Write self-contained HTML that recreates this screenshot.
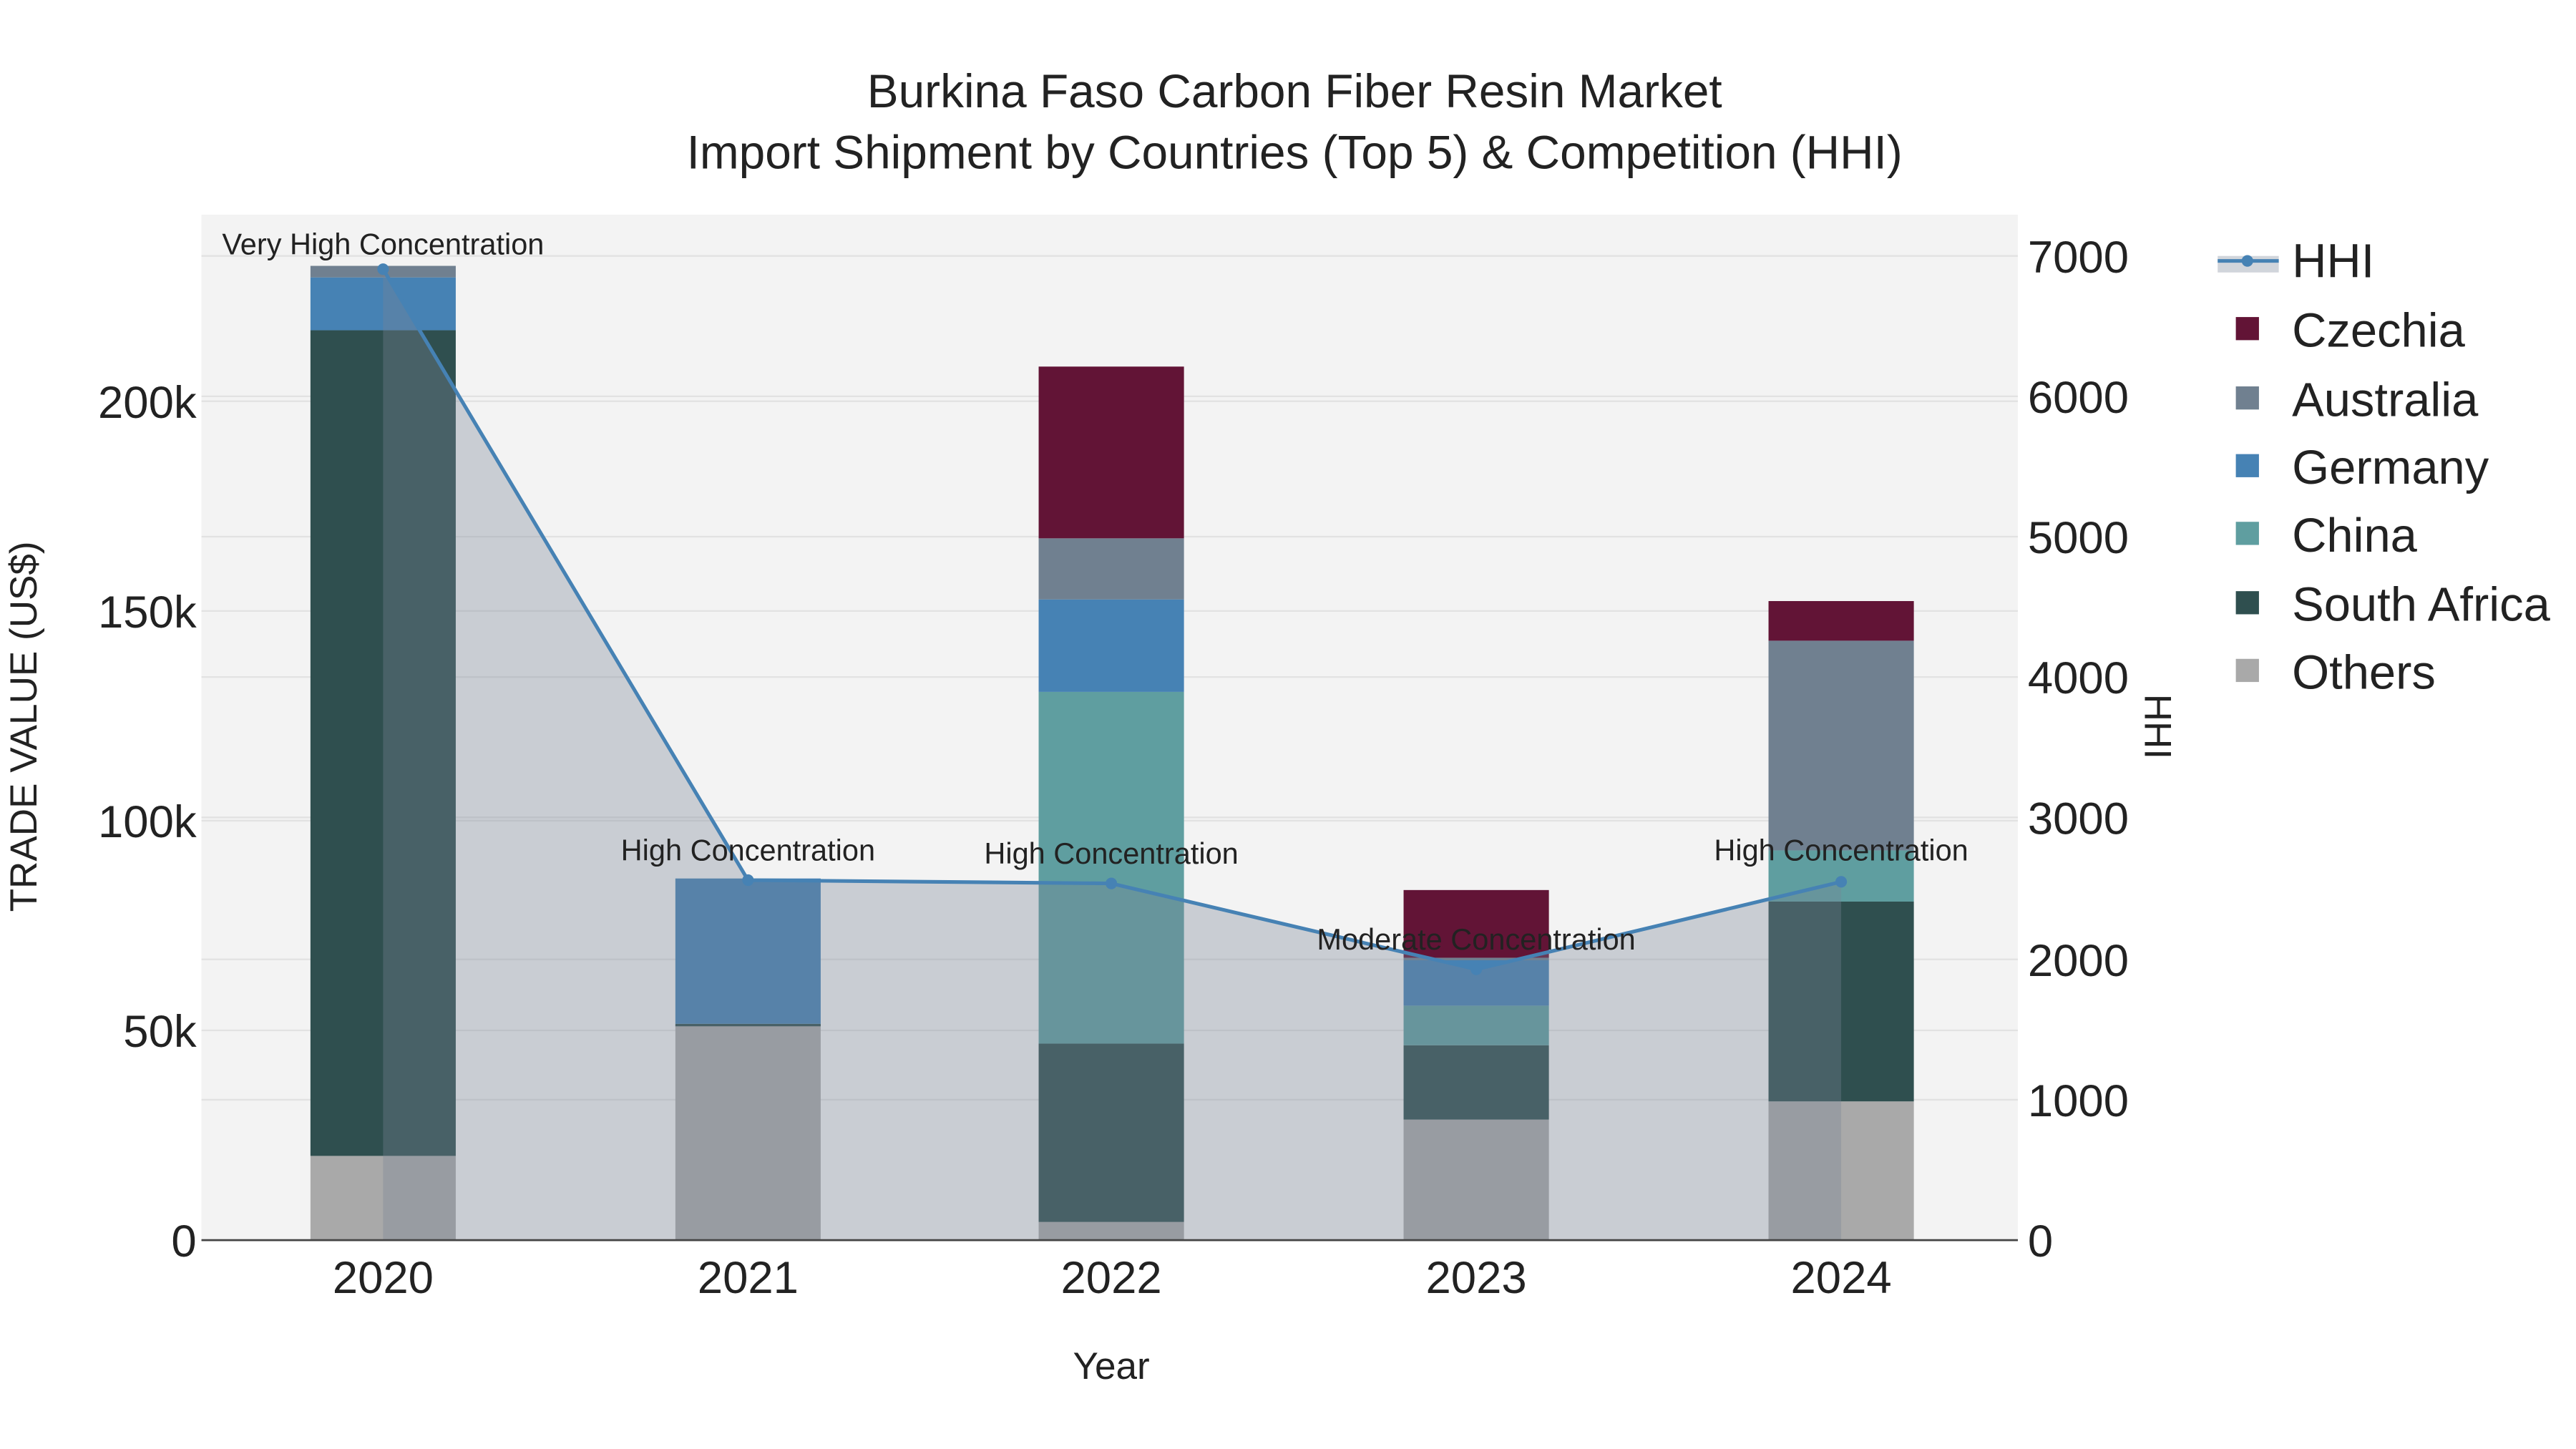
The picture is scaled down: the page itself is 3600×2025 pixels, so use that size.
<!DOCTYPE html>
<html><head><meta charset="utf-8"><style>
html,body{margin:0;padding:0;background:#fff;}
svg{display:block;}
text{font-family:"Liberation Sans",sans-serif;fill:#222;}
</style></head><body>
<svg width="3600" height="2025" viewBox="0 0 1560 877.5" xmlns="http://www.w3.org/2000/svg">
<rect x="0" y="0" width="1560" height="877.5" fill="#fff"/>
<rect x="122" y="130" width="1100" height="621" fill="#f3f3f3"/>
<g stroke="#e2e2e2" stroke-width="1">
<line x1="122" x2="1222" y1="624" y2="624"/><line x1="122" x2="1222" y1="497" y2="497"/>
<line x1="122" x2="1222" y1="370" y2="370"/><line x1="122" x2="1222" y1="243" y2="243"/>
<line x1="122" x2="1222" y1="666" y2="666"/><line x1="122" x2="1222" y1="581" y2="581"/>
<line x1="122" x2="1222" y1="495" y2="495"/><line x1="122" x2="1222" y1="410" y2="410"/>
<line x1="122" x2="1222" y1="325" y2="325"/><line x1="122" x2="1222" y1="240" y2="240"/>
<line x1="122" x2="1222" y1="155" y2="155"/>
</g>
<!-- 2020 -->
<rect x="188" y="700" width="88" height="51" fill="#a9a9a9"/>
<rect x="188" y="200" width="88" height="500" fill="#2f4f4f"/>
<rect x="188" y="168" width="88" height="32" fill="#4682b4"/>
<rect x="188" y="161" width="88" height="7" fill="#708090"/>
<!-- 2021 -->
<rect x="409" y="621" width="88" height="130" fill="#a9a9a9"/>
<rect x="409" y="620" width="88" height="1.5" fill="#2f4f4f"/>
<rect x="409" y="532" width="88" height="88" fill="#4682b4"/>
<!-- 2022 -->
<rect x="629" y="740" width="88" height="11" fill="#a9a9a9"/>
<rect x="629" y="632" width="88" height="108" fill="#2f4f4f"/>
<rect x="629" y="419" width="88" height="213" fill="#5f9ea0"/>
<rect x="629" y="363" width="88" height="56" fill="#4682b4"/>
<rect x="629" y="326" width="88" height="37" fill="#708090"/>
<rect x="629" y="222" width="88" height="104" fill="#621436"/>
<!-- 2023 -->
<rect x="850" y="678" width="88" height="73" fill="#a9a9a9"/>
<rect x="850" y="633" width="88" height="45" fill="#2f4f4f"/>
<rect x="850" y="609" width="88" height="24" fill="#5f9ea0"/>
<rect x="850" y="581" width="88" height="28" fill="#4682b4"/>
<rect x="850" y="580" width="88" height="1.5" fill="#708090"/>
<rect x="850" y="539" width="88" height="41" fill="#621436"/>
<!-- 2024 -->
<rect x="1071" y="667" width="88" height="84" fill="#a9a9a9"/>
<rect x="1071" y="546" width="88" height="121" fill="#2f4f4f"/>
<rect x="1071" y="515" width="88" height="31" fill="#5f9ea0"/>
<rect x="1071" y="388" width="88" height="127" fill="#708090"/>
<rect x="1071" y="364" width="88" height="24" fill="#621436"/>
<!-- HHI area -->
<path d="M232,163 L453,533 L673,535 L894,587 L1115,534 L1115,751 L232,751 Z" fill="rgb(119,132,149)" fill-opacity="0.34"/>
<path d="M232,163 L453,533 L673,535 L894,587 L1115,534" fill="none" stroke="#4682b4" stroke-width="2.2"/>
<g fill="#4682b4"><circle cx="232" cy="163" r="3.5"/><circle cx="453" cy="533" r="3.5"/><circle cx="673" cy="535" r="3.5"/><circle cx="894" cy="587" r="3.5"/><circle cx="1115" cy="534" r="3.5"/></g>
<line x1="122" x2="1222" y1="751" y2="751" stroke="#444" stroke-width="1.2"/>
<!-- annotations -->
<g font-size="18" text-anchor="middle">
<text x="232" y="154">Very High Concentration</text>
<text x="453" y="521">High Concentration</text>
<text x="673" y="523">High Concentration</text>
<text x="894" y="575">Moderate Concentration</text>
<text x="1115" y="521">High Concentration</text>
</g>
<!-- left ticks -->
<g font-size="27.5" text-anchor="end">
<text x="119" y="761">0</text><text x="119" y="634">50k</text><text x="119" y="507">100k</text>
<text x="119" y="380">150k</text><text x="119" y="253">200k</text>
</g>
<g font-size="27.5">
<text x="1228" y="761">0</text><text x="1228" y="676">1000</text><text x="1228" y="591">2000</text>
<text x="1228" y="505">3000</text><text x="1228" y="420">4000</text><text x="1228" y="335">5000</text>
<text x="1228" y="250">6000</text><text x="1228" y="165">7000</text>
</g>
<g font-size="27.5" text-anchor="middle">
<text x="232" y="783">2020</text><text x="453" y="783">2021</text><text x="673" y="783">2022</text>
<text x="894" y="783">2023</text><text x="1115" y="783">2024</text>
</g>
<text x="673" y="835" font-size="23" text-anchor="middle">Year</text>
<text transform="translate(22,440) rotate(-90)" font-size="23" text-anchor="middle">TRADE VALUE (US$)</text>
<text transform="translate(1299,440) rotate(90)" font-size="23" text-anchor="middle">HHI</text>
<text x="784" y="65" font-size="28.5" text-anchor="middle">Burkina Faso Carbon Fiber Resin Market</text>
<text x="784" y="102" font-size="28.5" text-anchor="middle">Import Shipment by Countries (Top 5) &amp; Competition (HHI)</text>
<!-- legend -->
<rect x="1343" y="155" width="37" height="10" fill="rgb(119,132,149)" fill-opacity="0.34"/>
<line x1="1343" x2="1380" y1="158" y2="158" stroke="#4682b4" stroke-width="2.2"/>
<circle cx="1361" cy="158" r="3.5" fill="#4682b4"/>
<rect x="1354" y="192" width="14" height="14" fill="#621436"/>
<rect x="1354" y="234" width="14" height="14" fill="#708090"/>
<rect x="1354" y="275" width="14" height="14" fill="#4682b4"/>
<rect x="1354" y="316" width="14" height="14" fill="#5f9ea0"/>
<rect x="1354" y="358" width="14" height="14" fill="#2f4f4f"/>
<rect x="1354" y="399" width="14" height="14" fill="#a9a9a9"/>
<g font-size="29">
<text x="1388" y="168">HHI</text><text x="1388" y="210">Czechia</text><text x="1388" y="252">Australia</text>
<text x="1388" y="293">Germany</text><text x="1388" y="334">China</text><text x="1388" y="376">South Africa</text>
<text x="1388" y="417">Others</text>
</g>
</svg>
</body></html>
